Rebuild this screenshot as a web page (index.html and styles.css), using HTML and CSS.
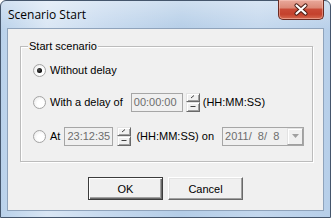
FILE: index.html
```html
<!DOCTYPE html>
<html>
<head>
<meta charset="utf-8">
<link rel="stylesheet" href="styles.css">
</head>
<body>
<div class="window">
  <div class="titlebar">
    <span class="title">Scenario Start</span>
    <div class="close">
      <svg width="44" height="19" viewBox="0 0 44 19">
        <path d="M17.5 5.5 L26.5 13.5 M26.5 5.5 L17.5 13.5" stroke="#4a1c14" stroke-width="4.2" stroke-linecap="round" fill="none"/>
        <path d="M17.5 5.5 L26.5 13.5 M26.5 5.5 L17.5 13.5" stroke="#ffffff" stroke-width="2.2" stroke-linecap="round" fill="none"/>
      </svg>
    </div>
  </div>
  <div class="client">
    <div class="group">
      <div class="legend">Start scenario</div>
      <div class="row r1">
        <span class="radio checked"></span><span class="label">Without delay</span>
      </div>
      <div class="row r2">
        <span class="radio"></span><span class="label">With a delay of</span>
        <div class="field f-delay">00:00:00</div>
        <div class="spin s-delay">
          <span class="half up"><svg width="6" height="4" viewBox="0 0 6 4"><path d="M1 3 L4 0.5" stroke="#404040" stroke-width="1" fill="none"/></svg></span>
          <span class="half down"><svg width="6" height="4" viewBox="0 0 6 4"><path d="M0.5 1.5 L5.5 1.5" stroke="#404040" stroke-width="1" fill="none"/></svg></span>
        </div>
        <span class="label l-hms">(HH:MM:SS)</span>
      </div>
      <div class="row r3">
        <span class="radio"></span><span class="label">At</span>
        <div class="field f-at">23:12:35</div>
        <div class="spin s-at">
          <span class="half up"><svg width="6" height="4" viewBox="0 0 6 4"><path d="M1 3 L4 0.5" stroke="#404040" stroke-width="1" fill="none"/></svg></span>
          <span class="half down"><svg width="6" height="4" viewBox="0 0 6 4"><path d="M0.5 1.5 L5.5 1.5" stroke="#404040" stroke-width="1" fill="none"/></svg></span>
        </div>
        <span class="label l-on">(HH:MM:SS) on</span>
        <div class="combo">
          <span class="combo-text">2011/&nbsp; 8/&nbsp; 8</span>
          <span class="drop"><svg width="7" height="4" viewBox="0 0 7 4"><path d="M0 0 L7 0 L3.5 4 Z" fill="#a0a0a0"/></svg></span>
        </div>
      </div>
    </div>
    <div class="buttons">
      <button class="btn default">OK</button>
      <button class="btn">Cancel</button>
    </div>
  </div>
</div>
</body>
</html>
```
FILE: styles.css
```css
html, body {
  margin: 0;
  padding: 0;
  background: #ffffff;
}
body {
  font-family: "Liberation Sans", Arial, sans-serif;
  font-size: 11px;
  color: #000;
}
.window {
  width: 331px;
  height: 218px;
  box-sizing: border-box;
  border: 1px solid #45566c;
  border-radius: 6px 6px 0 0;
  padding: 0 6px 6px;
  display: flex;
  flex-direction: column;
  background:
    linear-gradient(to bottom, rgba(255,255,255,0.35), rgba(255,255,255,0) 30px),
    linear-gradient(to right, #b9d1ea 0%, #d9e6f4 14%, #c6d9ee 32%, #b4cde7 55%, #c3d7ed 78%, #b7cfe9 100%);
}
.titlebar {
  height: 27px;
  flex: none;
  display: flex;
  align-items: flex-start;
}
.title {
  font-family: "Open Sans", "Noto Sans", sans-serif;
  font-size: 12px;
  line-height: 16px;
  margin: 6px 0 0 1px;
  color: #000;
}
.close {
  margin-left: auto;
  margin-top: -1px;
  width: 46px;
  height: 20px;
  box-sizing: border-box;
  border: 1px solid #6b2b22;
  border-top: none;
  border-radius: 0 0 5px 5px;
  background: linear-gradient(to bottom, #e9a99b 0%, #dc8a78 40%, #c94a36 50%, #c4412d 75%, #d66a50 100%);
  box-shadow: inset 0 0 0 1px rgba(255,210,200,0.45);
  display: flex;
}
.client {
  flex: 1;
  background: #f0f0f0;
  border: 1px solid #8fa3bb;
  display: flex;
  flex-direction: column;
}
.group {
  margin: 17px 10px 0 12px;
  border: 1px solid #bcbcbc;
  box-shadow: inset 1px 1px #ffffff, 1px 1px #ffffff;
  padding-bottom: 15px;
  display: flex;
  flex-direction: column;
}
.legend {
  align-self: flex-start;
  margin: -7px 0 0 7px;
  padding: 0 1px;
  line-height: 13px;
  background: #f0f0f0;
}
.row {
  height: 20px;
  display: flex;
  align-items: center;
}
.r1 { margin-top: 7px; }
.r2 { margin-top: 12px; }
.r3 { margin-top: 14px; }
.radio {
  flex: none;
  width: 13px;
  height: 13px;
  box-sizing: border-box;
  margin-left: 12px;
  border-radius: 50%;
  border: 1px solid #a4a4a4;
  background: radial-gradient(circle at 60% 60%, #ffffff 35%, #e4e4e4 100%);
  display: flex;
  align-items: center;
  justify-content: center;
}
.radio.checked::after {
  content: "";
  width: 5px;
  height: 5px;
  border-radius: 50%;
  background: radial-gradient(circle at 40% 40%, #555 0%, #000 70%);
}
.label {
  margin-left: 4px;
  white-space: nowrap;
  line-height: 13px;
}
.field {
  height: 19px;
  box-sizing: border-box;
  border: 1px solid #a6a6a6;
  background: #f0f0f0;
  color: #6d6d6d;
  padding-left: 2px;
  line-height: 17px;
  white-space: nowrap;
}
.f-delay { width: 52px; margin-left: 8px; }
.f-at { width: 49px; margin-left: 4px; }
.spin {
  width: 14px;
  height: 19px;
  display: flex;
  flex-direction: column;
}
.s-delay { margin-left: 3px; }
.s-at { margin-left: 4px; }
.half {
  flex: 1;
  box-sizing: border-box;
  border: 1px solid;
  border-color: #e3e3e3 #696969 #696969 #e3e3e3;
  box-shadow: inset 1px 1px #ffffff, inset -1px -1px #a0a0a0;
  background: #f0f0f0;
  display: flex;
  align-items: center;
  justify-content: center;
}
.l-hms { margin-left: 3px; }
.l-on { margin-left: 5px; }
.combo {
  margin-left: 8px;
  width: 82px;
  height: 19px;
  box-sizing: border-box;
  border: 1px solid #a6a6a6;
  background: #f0f0f0;
  display: flex;
  align-items: stretch;
}
.combo-text {
  flex: 1;
  color: #6d6d6d;
  padding-left: 2px;
  line-height: 17px;
  white-space: nowrap;
}
.drop {
  width: 16px;
  box-sizing: border-box;
  border: 1px solid;
  border-color: #e3e3e3 #a0a0a0 #a0a0a0 #e3e3e3;
  box-shadow: inset 1px 1px #ffffff;
  background: #f0f0f0;
  display: flex;
  align-items: center;
  justify-content: center;
}
.buttons {
  margin-top: 15px;
  display: flex;
  justify-content: center;
  gap: 5px;
}
.btn {
  width: 75px;
  height: 23px;
  box-sizing: border-box;
  margin: 0;
  padding: 0;
  font-family: "Liberation Sans", Arial, sans-serif;
  font-size: 11px;
  color: #000;
  background: #f0f0f0;
  border: 1px solid;
  border-color: #ffffff #696969 #696969 #ffffff;
  box-shadow: inset -1px -1px #a0a0a0, inset 1px 1px #e3e3e3;
}
.btn.default {
  border: 1px solid #3c3c3c;
  box-shadow: inset 1px 1px #ffffff, inset -1px -1px #696969, inset -2px -2px #a0a0a0;
}
```
